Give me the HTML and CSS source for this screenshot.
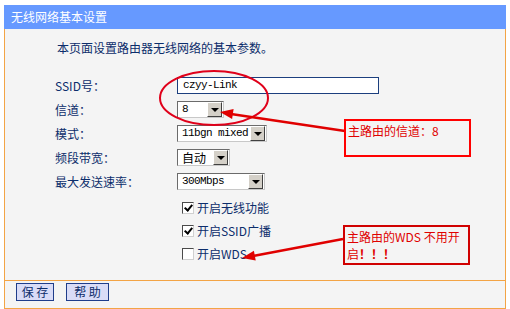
FILE: index.html
```html
<!DOCTYPE html>
<html lang="zh-CN">
<head>
  <meta charset="UTF-8">
  <title>无线网络基本设置</title>
  <link rel="stylesheet" href="styles.css">
</head>
<body>
  <div class="panel">
    <div class="title">无线网络基本设置</div>
    <div class="box">
      <div class="content">
        <p class="intro">本页面设置路由器无线网络的基本参数。</p>

        <div class="form">
          <label>SSID号：</label>
          <div class="field"><span class="text-input">czyy-Link</span></div>

          <label>信道：</label>
          <div class="field">
            <span class="select w-channel"><span class="value">8</span><span class="drop"></span></span>
          </div>

          <label>模式：</label>
          <div class="field">
            <span class="select w-mode"><span class="value">11bgn mixed</span><span class="drop"></span></span>
          </div>

          <label>频段带宽：</label>
          <div class="field">
            <span class="select w-band"><span class="value cjk">自动</span><span class="drop"></span></span>
          </div>

          <label>最大发送速率：</label>
          <div class="field">
            <span class="select w-rate"><span class="value">300Mbps</span><span class="drop"></span></span>
          </div>
        </div>

        <div class="checks">
          <div class="check-row"><span class="check on"></span>开启无线功能</div>
          <div class="check-row"><span class="check on"></span>开启SSID广播</div>
          <div class="check-row"><span class="check"></span>开启WDS</div>
        </div>
      </div>

      <div class="footer">
        <button class="btn btn-save">保 存</button>
        <button class="btn btn-help">帮 助</button>
      </div>
    </div>
  </div>

  <!-- 标注 -->
  <svg class="marks" width="510" height="309" viewBox="0 0 510 309">
    <ellipse cx="214" cy="98" rx="54" ry="27" fill="none" stroke="#e0001a" stroke-width="2"/>
    <line x1="345" y1="131" x2="231" y2="114" stroke="#e00000" stroke-width="2.5"/>
    <polygon points="220,112 232.1,118.9 233.6,109.1" fill="#e00000"/>
    <line x1="343" y1="239" x2="253" y2="256" stroke="#e00000" stroke-width="2.5"/>
    <polygon points="242,258 255.7,260.5 253.9,250.7" fill="#e00000"/>
  </svg>
  <div class="note note-channel">主路由的信道：8</div>
  <div class="note note-wds">主路由的WDS 不用开<br>启<b>！！！</b></div>
</body>
</html>
```

FILE: styles.css
```css
body {
  margin: 0;
  background: #ffffff;
  font-family: "Noto Sans CJK SC", "Liberation Sans", sans-serif;
  font-size: 12px;
  color: #0c2d6b;
}

.panel {
  width: 502px;
  margin: 5px 0 0 4px;
}

.title {
  height: 24px;
  line-height: 23px;
  padding-left: 7px;
  background: #6699ff;
  color: #ffffff;
  font-size: 12px;
}

.box {
  border: 1px solid #f3a445;
  border-top: none;
}

.content {
  height: 251px;
  padding-left: 50px;
  background: #f4f4f4;
  box-sizing: border-box;
  padding-top: 12px;
}

.intro {
  margin: 0 0 0 2px;
  height: 14px;
  line-height: 14px;
}

.form {
  display: grid;
  grid-template-columns: 122px auto;
  grid-auto-rows: 17px;
  row-gap: 7px;
  margin-top: 22px;
}

.form label {
  line-height: 17px;
}

.field {
  display: flex;
  align-items: center;
}

.text-input {
  width: 202px;
  height: 17px;
  box-sizing: border-box;
  border: 1px solid #1c3f7e;
  background: #ffffff;
  padding-left: 5px;
  font-family: "Liberation Mono", monospace;
  font-size: 11px;
  letter-spacing: -0.6px;
  line-height: 15px;
  color: #000000;
}

.select {
  display: flex;
  align-items: center;
  height: 17px;
  box-sizing: border-box;
  border: 1px solid #6b6b6b;
  border-right-color: #c8c8c8;
  border-bottom-color: #c8c8c8;
  background: #ffffff;
}

.select .value {
  flex: 1;
  padding-left: 4px;
  font-family: "Liberation Mono", monospace;
  font-size: 11px;
  letter-spacing: -0.6px;
  line-height: 15px;
  color: #000000;
  white-space: nowrap;
}

.select .value.cjk {
  font-family: "Noto Sans CJK SC", sans-serif;
  font-size: 12px;
  letter-spacing: 0;
}

.drop {
  position: relative;
  width: 13px;
  height: 13px;
  margin-right: 1px;
  background: #d4d0c8;
  border: 1px solid #ffffff;
  border-right-color: #404040;
  border-bottom-color: #404040;
}

.drop::after {
  content: "";
  position: absolute;
  left: 3px;
  top: 5px;
  border-left: 4px solid transparent;
  border-right: 4px solid transparent;
  border-top: 4px solid #000000;
}

.w-channel { width: 47px; }
.w-mode { width: 90px; }
.w-band { width: 53px; }
.w-rate { width: 88px; }

.checks {
  display: flex;
  flex-direction: column;
  gap: 6px;
  margin: 9px 0 0 127px;
}

.check-row {
  display: flex;
  align-items: center;
  height: 17px;
}

.check {
  position: relative;
  width: 12px;
  height: 12px;
  box-sizing: border-box;
  margin-right: 3px;
  border: 1px solid #4a4a4a;
  border-right-color: #d0d0d0;
  border-bottom-color: #d0d0d0;
  background: #ffffff;
}

.check.on::after {
  content: "";
  position: absolute;
  left: 3px;
  top: 0px;
  width: 3px;
  height: 6px;
  border-right: 2px solid #000000;
  border-bottom: 2px solid #000000;
  transform: rotate(40deg);
}

.footer {
  height: 25px;
  border-top: 1px solid #f3a445;
  background: #f4f4f4;
  display: flex;
  gap: 12px;
  padding: 2px 0 0 11px;
  box-sizing: content-box;
}

.btn {
  height: 18px;
  padding: 0;
  border: 1px solid #1f3d8a;
  background: #d9dcf7;
  color: #0c2d6b;
  font-family: "Noto Sans CJK SC", sans-serif;
  font-size: 12px;
  line-height: 16px;
}

.btn-save { width: 38px; }
.btn-help { width: 43px; }

.marks {
  position: absolute;
  left: 0;
  top: 0;
  pointer-events: none;
}

.note {
  position: absolute;
  box-sizing: border-box;
  color: #e00000;
  white-space: nowrap;
  font-size: 12px;
}

.note b {
  font-weight: bold;
}

.note-channel {
  left: 344px;
  top: 119px;
  width: 127px;
  height: 38px;
  border: 2px solid #ff0000;
  padding: 3px 0 0 2px;
  line-height: 14px;
}

.note-wds {
  left: 343px;
  top: 225px;
  width: 127px;
  height: 40px;
  border: 2px solid #d00000;
  padding: 1px 0 0 2px;
  line-height: 17px;
}
```
